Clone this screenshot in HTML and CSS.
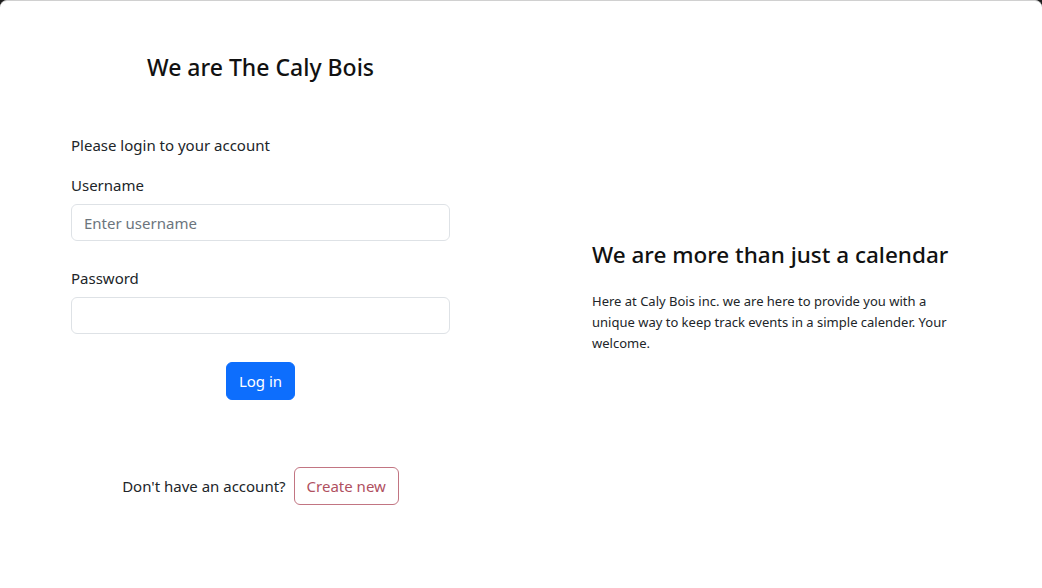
FILE: index.html
```html
<!DOCTYPE html>
<html lang="en">
<head>
<meta charset="utf-8">
<title>Caly Bois</title>
<link rel="stylesheet" href="styles.css">
</head>
<body>
<div class="frame">
  <main class="page">
    <section class="left">
      <h1 class="brand">We are The Caly Bois</h1>
      <form class="login">
        <p class="intro">Please login to your account</p>
        <div class="field">
          <label class="label" for="u">Username</label>
          <input class="control" id="u" type="text" placeholder="Enter username">
        </div>
        <div class="field">
          <label class="label" for="p">Password</label>
          <input class="control" id="p" type="password">
        </div>
        <div class="actions">
          <button type="button" class="btn btn-primary">Log in</button>
        </div>
      </form>
      <div class="signup">
        <span class="signup-text">Don't have an account?</span>
        <button type="button" class="btn btn-outline">Create new</button>
      </div>
    </section>
    <section class="right">
      <div class="pitch">
        <h2 class="pitch-title">We are more than just a calendar</h2>
        <p class="pitch-text">Here at Caly Bois inc. we are here to provide you with a unique way to keep track events in a simple calender. Your welcome.</p>
      </div>
    </section>
  </main>
</div>
</body>
</html>
```

FILE: styles.css
```css
* { box-sizing: border-box; }
html, body { margin: 0; height: 100%; }
body {
  background: #1e1e1e;
  font-family: "Noto Sans", "Open Sans", sans-serif;
  color: #212529;
}
.frame {
  height: 588px;
  background: #fff;
  border-top: 1px solid #d0d0d0;
  border-radius: 7px 7px 0 0;
  overflow: hidden;
}
.page {
  display: flex;
  height: 100%;
}
.left {
  width: 379px;
  margin-left: 71px;
  display: flex;
  flex-direction: column;
}
.brand {
  margin: 50px 0 0;
  text-align: center;
  font-size: 23px;
  font-weight: 500;
  line-height: 32px;
  color: #111;
}
.login { margin-top: 50px; }
.intro {
  margin: 0 0 16px;
  font-size: 15px;
  line-height: 24px;
}
.field { margin-bottom: 25px; }
.label {
  display: block;
  font-size: 15px;
  line-height: 24px;
  margin-bottom: 7px;
}
.control {
  display: block;
  width: 100%;
  height: 37px;
  padding: 6px 12px;
  font: inherit;
  font-size: 15px;
  color: #212529;
  border: 1px solid #dee2e6;
  border-radius: 6px;
  background: #fff;
}
.control::placeholder { color: #6c757d; }
.actions {
  display: flex;
  justify-content: center;
  margin-top: 28px;
}
.btn {
  height: 38px;
  padding: 0 12px;
  font: inherit;
  font-size: 15px;
  border-radius: 6px;
  cursor: pointer;
}
.btn-primary {
  background: #0d6efd;
  border: 1px solid #0d6efd;
  color: #fff;
}
.signup {
  margin-top: 67px;
  display: flex;
  justify-content: center;
  align-items: center;
  gap: 8px;
  font-size: 15px;
}
.btn-outline {
  background: #fff;
  border: 1px solid #c27582;
  color: #b0505f;
}
.right {
  flex: 1;
  display: flex;
  align-items: center;
  padding-left: 142px;
}
.pitch { width: 380px; margin-top: 4px; }
.pitch-title {
  margin: 0 0 21px;
  font-size: 22.5px;
  font-weight: 500;
  line-height: 30px;
  color: #111;
}
.pitch-text {
  margin: 0;
  font-size: 13px;
  line-height: 21px;
}
```
